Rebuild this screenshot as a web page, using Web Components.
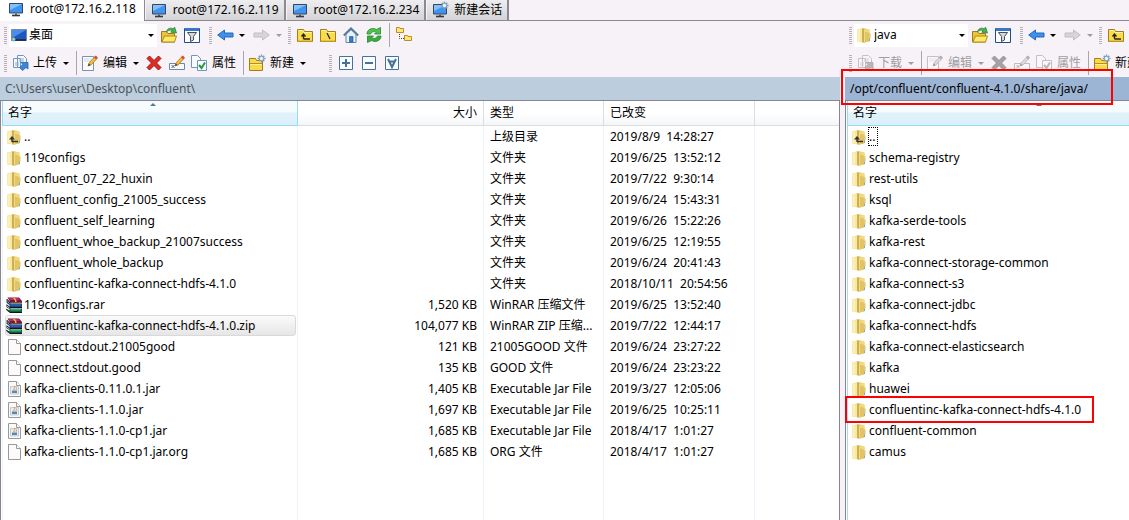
<!DOCTYPE html>
<html lang="zh-CN">
<head>
<meta charset="utf-8">
<title>confluent - WinSCP</title>
<style>
html,body{height:100%}
body{margin:0;background:#f7f2f7;color:#000;font:12px/20px "Noto Sans","Noto Sans CJK SC",sans-serif}
</style>
</head>
<body>
<file-commander></file-commander>
<script>
const FOLDER = '<path d="M1.500 2.500 8 1l5.500 1.500v12L8 15.500l-6.500-1z" fill="#edd778"/><path d="M1.500 2.500 6 1.500v13.700l-4.500-.7z" fill="#f8e9a0"/><path d="M6 1.200 8.500 2v14L6 15z" fill="#cdae55"/><path d="M8 2.500h5.500v11.500L8 15.500z" fill="#f0da83"/><path d="M9 4.500 13.500 6v8L9 15.500z" fill="#e2c464"/><path d="M3 3v11" stroke="#fff8cf"/><path d="M14 6.500v5" stroke="#ddbf5a"/><path d="M13.500 11.500v2.500" stroke="#65b7da"/>';
const YF = '<path d="M.5 2.500h6l1 2h8v10H.5z" fill="#f8dc49" stroke="#a37f1a"/><path d="M1.500 3.500h4.500l1 2h7.500" fill="none" stroke="#fff3a4"/><path d="M1 14h14" stroke="#d9ae28"/>';
const PAGE = '<path d="M2.500.5h8l4 4v11h-12z" fill="#fbf9f9" stroke="#999"/><path d="M10.500.5v4h4" fill="#fff" stroke="#999"/>';
const PENCIL = '<path d="m6 11 1-3 6.500-7 2 2L9 10z" fill="#f6bd3d" stroke="#a77824" stroke-width=".8"/><path d="m12 2.500 1.700-2 2 2-1.700 2z" fill="#d94d3d"/><path d="m6 11 .8-2.500L8.500 10z" fill="#513a2b"/>';
const MONITOR = '<path d="M1.500 2.500h13v9.500h-13z" fill="#4093ee" stroke="#34475d"/><path d="M2 3h12L2 9z" fill="#83c0ff"/><path d="M7 12.500h2v1.500H7z" fill="#666"/><path d="M4 14.500h8" stroke="#33373d" stroke-width="1.600"/>';
const GEAR = '<g transform="translate(12.500 3.500)"><path d="M0-4V4M-4 0H4M-2.800-2.800 2.800 2.800M-2.800 2.800 2.800-2.800" stroke="#7f9bb8" stroke-width="1.400"/><circle r="2.200" fill="#edf4fc" stroke="#7f9bb8"/></g>';
const ARROW = (a,b) => `<path d="M7.500 3v3H16v4H7.500v3L.7 8z" fill="${a}" stroke="${b}"/>`;
const BOX = '<path d="M1.500 1.500h13v13h-13z" fill="#f8fbff" stroke="#467199"/>';
const ICONS = {
  monitor: MONITOR,
  newsession: MONITOR + GEAR,
  desktop: '<path d="M.5 2.500h15v11H.5z" fill="#1d59c0" stroke="#7c8aa0"/><path d="M1 3h14L1 11z" fill="#4c8de8"/><path d="M1 12h14v2H1z" fill="#233246"/><circle cx="2.500" cy="12.500" r="2" fill="#51b8e4"/><path d="M2 11h1.500v2H2z" fill="#ffcb3d"/>',
  folder: FOLDER,
  parent: FOLDER + '<path d="M6 12.500h6M6 13V9" fill="none" stroke="#333" stroke-width="1.400"/><path d="M3 10.500 6 7l3 3.500z" fill="#333"/>',
  file: PAGE,
  jar: PAGE + '<path d="M4.500 5.500h8v7.500h-8z" fill="#e5eef5" stroke="#a7bccd" stroke-width=".7"/><path d="M6 9.500h5V12H6z" fill="#5d86a5"/><path d="M8 9c-1-2 2-2 .5-4M10 9c0-1 1-1 .5-2.500" fill="none" stroke="#e19247"/>',
  rar: '<path d="M1 2 4 5v10.500L.5 13z" fill="#eee" stroke="#222" stroke-width=".7"/><path d="M1.500.5H13L16 4v1.500H4.500z" fill="#7d163b"/><path d="M2 1h10l2 2H4z" fill="#b93062"/><path d="M1 4.500 4 7h12v3H4L1 7.500z" fill="#163f87"/><path d="M4.500 7.500H15v1H4.500z" fill="#3783d3"/><path d="M1 9.500 4 11.500h12v3.800H4L1 13z" fill="#105d3c"/><path d="M4.500 12H15v1.500H4.500z" fill="#36af65"/><path d="M0 5.500 3.500 8v1.500L0 7zM0 10l3.500 2v1.500L0 11.500z" fill="#fff"/><path d="M1 3.500 4 6h12M1 8l3 2.500h12M1 12.500l3 3h12" fill="none" stroke="#16121c"/><path d="M7 1h2l1.500 2.500V5H9V3.500z" fill="#e4bc42"/>',
  open: '<path d="M.5 15V4.500h5l1.500 2h6.500V15z" fill="#edc538" stroke="#a17b1b"/><path d="m.8 15 2.700-6h12l-2 6z" fill="#ffea68" stroke="#ae8822"/><path d="M5.500 5C6 1.500 9 .3 12 1.700L13.700.3l1.800 5.700-5.800-.8 1.500-1.500C9 2.400 7 3.500 5.500 5z" fill="#41b44b" stroke="#237d31" stroke-width=".7"/>',
  filter: '<path d="M.5 1.500h15v14H.5z" fill="#fff" stroke="#204d8d"/><path d="M1 1h14v3H1z" fill="#3976c5"/><path d="M3.500 5.500h9L9.500 9.500V13l-3 1.500v-5z" fill="#d4d8df" stroke="#454f60"/>',
  back: ARROW('#3d90ec','#2568b9'),
  forward: `<g transform="translate(16 0) scale(-1 1)">${ARROW('#bcb8be','#8e8a90')}</g>`,
  up: YF + '<path d="M6.500 12H13M6.500 12V8M4.500 9.500l2-2.500 2 2.500" fill="none" stroke="#29251a" stroke-width="1.400"/>',
  root: YF + '<path d="m7 6 3 6" stroke="#29251a" stroke-width="1.200"/>',
  home: '<path d="M3 7v8.500h10V7L8 2.500z" fill="#e8f2fb" stroke="#6784a4"/><path d="M.8 8.500 8 1.500l7.200 7" fill="none" stroke="#567a9e" stroke-width="2"/><path d="M6.500 9.500h3.500V15H6.500z" fill="#3b7dcc" stroke="#235b9b" stroke-width=".7"/>',
  refresh: '<path d="M1 7C1 2.500 6 0 10.500 2.500L14.500.5V7H8.500l2-2C7.500 4 5 5 4.500 7z" fill="#4dc44b" stroke="#24852d" stroke-width=".8"/><path d="M15 9c0 4.500-5 7-9.500 4.500L1.500 15.500V9h6l-2 2c3 1 5.500 0 6-2z" fill="#39ad3c" stroke="#24852d" stroke-width=".8"/>',
  tree: '<path d="M.5 1V.500h3l.5 1h3.500v4h-7zM8.500 8.500h3l.5 1h3.500v4h-7z" fill="#ffe57a" stroke="#b98d1e"/><path d="M3.500 7v4.500H8" fill="none" stroke="#444" stroke-dasharray="1 1"/>',
  upload: '<path d="M1.500 3.500h7v9h-7zM5.500.5h6l3 3v9h-9z" fill="#f6faff" stroke="#7196bd"/><path d="M7 4h5M7 6h5M3 8h4M3 10h4" stroke="#8aaed4"/><path d="M9 7.500h7V14l-2-1.500-3.500 3-3-3L11 9.500z" fill="#3c86db" stroke="#2865ad" stroke-width=".8"/>',
  edit: '<path d="M.5 1.500h11v14H.5z" fill="#fafcff" stroke="#7792af"/><path d="M2 4h8M2 6h7" stroke="#cbd7e3"/>' + PENCIL,
  delete: '<path d="M3.500 1 8 5.500 12.500 1 15 3.500 10.500 8l4.500 4.500-2.500 2.500L8 10.500 3.500 15 1 12.500 5.500 8 1 3.500z" fill="#dc2d25" stroke="#a71513"/>',
  rename: '<path d="M.5 8.500h15v6H.5z" fill="#f7faff" stroke="#668baf"/><path d="m2.500 10 3 3m0-3-3 3" stroke="#4c6682"/>' + PENCIL,
  props: '<path d="M.5.5h6l3 3v9h-9z" fill="#f8fbff" stroke="#7295ba"/><path d="M6.500 5.500h9v10h-9z" fill="#f9fbff" stroke="#7295ba"/><path d="m8 10 2.500 3L14 7.500" fill="none" stroke="#28983d" stroke-width="2"/>',
  newfolder: '<path d="M.5 3.500h6l1 2h6v10H.5z" fill="#f9db4a" stroke="#a37f1a"/><path d="M1 8.500h12" stroke="#b6901e"/><path d="M1.500 9.500h11" stroke="#fff1a0"/>' + GEAR,
  plus: BOX + '<path d="M4 8h8M8 4v8" stroke="#467199" stroke-width="2"/>',
  minus: BOX + '<path d="M4 8h8" stroke="#467199" stroke-width="2"/>',
  invert: BOX + '<path d="m4 4 4 8 4-8M5 6.500h6" fill="none" stroke="#467199" stroke-width="2"/>'
};

const define = (tag, css, render) => customElements.define(tag, class extends HTMLElement {
  connectedCallback() {
    if (this.shadowRoot) return;
    this.attachShadow({mode: 'open'}).innerHTML = `<style>*,::before,::after{box-sizing:border-box}:host{box-sizing:border-box}${css}</style>${render(this)}`;
  }
});

define('ui-icon', ':host{display:block;flex:none;width:16px;height:16px}svg{display:block;width:16px;height:16px;overflow:visible}',
  el => `<svg viewBox="0 0 16 16" aria-hidden="true">${ICONS[el.getAttribute('name')]}</svg>`);

define('session-tab', `
:host{display:block;flex:none;height:20px}
:host([active]){height:21px}
button{display:flex;align-items:center;gap:6px;height:100%;padding:0 5px;font:inherit;font-size:12px;line-height:16px;white-space:nowrap;color:#000;border:solid #8c8a8e;border-width:0 2px 0 0;background:linear-gradient(#eeedef,#d4d4d6)}
:host([active]) button{background:#fff;padding:0 8px 4px;border-right-width:1px}`,
  el => `<button role="tab" aria-selected="${el.hasAttribute('active')}"><ui-icon name="${el.getAttribute('icon')}"></ui-icon><slot></slot></button>`);

define('tool-grip', `:host{display:block;flex:none;width:3px;height:17px;margin-right:2px;background:repeating-linear-gradient(#b5b1b6 0 1px,transparent 1px 2px)}`, () => '');
define('tool-sep', `:host{display:block;flex:none;width:1px;height:24px;margin:0 2px 0 4px;background:#a9a6aa}`, () => '');

define('tool-button', `
:host{display:block;flex:none}
button{display:flex;align-items:center;justify-content:center;height:23px;min-width:23px;padding:0 3px;border:0;background:none;color:#000;font:inherit;line-height:20px}
.t{margin-left:5px;white-space:nowrap}
.c{width:0;border:3px solid transparent;border-top-color:#000;border-bottom:0;margin-left:6px}
:host([plain]) .c{margin-right:3px}
button:disabled{color:#a09da1}
button:disabled ui-icon{filter:grayscale(1);opacity:.5}
button:disabled .c{border-top-color:#a09da1}`,
  el => {
    const t = el.textContent.trim();
    return `<button aria-label="${t || el.getAttribute('icon')}"${el.hasAttribute('off') ? ' disabled' : ''}><ui-icon name="${el.getAttribute('icon')}"></ui-icon>${t ? '<span class="t"><slot></slot></span>' : ''}${el.hasAttribute('menu') ? '<span class="c"></span>' : ''}</button>`;
  });

define('location-box', `
:host{display:flex;flex:none;align-items:center;width:148px;height:23px;padding-left:2px;background:#fff}
:host([narrow]){width:114px}
select{appearance:none;flex:1;min-width:0;height:22px;border:0;padding:0 0 0 2px;background:none;font:inherit;color:#000;outline:0}
i{width:0;border:3px solid transparent;border-top-color:#000;border-bottom:0;margin-right:3px}`,
  el => `<ui-icon name="${el.getAttribute('icon')}"></ui-icon><select aria-label="位置"><option>${el.getAttribute('value')}</option></select><i></i>`);

define('tool-row', `:host{display:flex;align-items:center;height:28px;padding-left:4px;overflow:hidden}`, () => '<slot></slot>');

define('path-bar', `
:host{display:block;position:relative;height:23px;padding:0 5px;line-height:23px;background:#bccddd;color:#4b535b;white-space:nowrap}
:host([active]){background:#9db5d5;color:#000}
:host([marked])::after{content:"";box-sizing:border-box;position:absolute;z-index:2;left:-4px;top:-8px;width:272px;height:36px;border:2px solid #f00}`, () => '<slot></slot>');

const LOCAL = [
  ['parent','..','','上级目录','2019/8/9  14:28:27'],
  ['folder','119configs','','文件夹','2019/6/25  13:52:12'],
  ['folder','confluent_07_22_huxin','','文件夹','2019/7/22  9:30:14'],
  ['folder','confluent_config_21005_success','','文件夹','2019/6/24  15:43:31'],
  ['folder','confluent_self_learning','','文件夹','2019/6/26  15:22:26'],
  ['folder','confluent_whoe_backup_21007success','','文件夹','2019/6/25  12:19:55'],
  ['folder','confluent_whole_backup','','文件夹','2019/6/24  20:41:43'],
  ['folder','confluentinc-kafka-connect-hdfs-4.1.0','','文件夹','2018/10/11  20:54:56'],
  ['rar','119configs.rar','1,520 KB','WinRAR 压缩文件','2019/6/25  13:52:40'],
  ['rar','confluentinc-kafka-connect-hdfs-4.1.0.zip','104,077 KB','WinRAR ZIP 压缩...','2019/7/22  12:44:17','sel'],
  ['file','connect.stdout.21005good','121 KB','21005GOOD 文件','2019/6/24  23:27:22'],
  ['file','connect.stdout.good','135 KB','GOOD 文件','2019/6/24  23:23:22'],
  ['jar','kafka-clients-0.11.0.1.jar','1,405 KB','Executable Jar File','2019/3/27  12:05:06'],
  ['jar','kafka-clients-1.1.0.jar','1,697 KB','Executable Jar File','2019/6/25  10:25:11'],
  ['jar','kafka-clients-1.1.0-cp1.jar','1,685 KB','Executable Jar File','2018/4/17  1:01:27'],
  ['file','kafka-clients-1.1.0-cp1.jar.org','1,685 KB','ORG 文件','2018/4/17  1:01:27']
];
const REMOTE = [
  ['parent','..','focus'],
  ...['schema-registry','rest-utils','ksql','kafka-serde-tools','kafka-rest','kafka-connect-storage-common','kafka-connect-s3','kafka-connect-jdbc','kafka-connect-hdfs','kafka-connect-elasticsearch','kafka','huawei'].map(n => ['folder', n]),
  ['folder','confluentinc-kafka-connect-hdfs-4.1.0','marked'],
  ['folder','confluent-common'], ['folder','camus']
];
const nameCell = (icon, name, state = '') => `<td><div class="n ${state}"><ui-icon name="${icon}"></ui-icon><span>${name}</span></div></td>`;

define('file-list', `
:host{display:flex;flex:1;min-height:0;border:solid #87858f;border-width:1px 1px 0;padding-left:1px;background:#fff}
:host([remote]){border-right:0}
table{flex:none;width:100%;height:100%;table-layout:fixed;border-collapse:separate;border-spacing:0}
th,td{padding:0 6px;text-align:left;font-weight:400;white-space:pre;overflow:hidden}
th{height:25px;position:relative;background:linear-gradient(#fff 50%,#f5f6f8);border:solid #dcdde0;border-width:0 1px 1px 0}
th:first-child{background:linear-gradient(#f6fbfe 45%,#e0f2fa 50%,#dceff8);border:1px solid #96d9f9;border-top:0;padding-left:5px}
th:first-child::after{content:"";position:absolute;top:2px;left:50%;border:3px solid transparent;border-bottom-color:#4d7c96;border-top:0}
th:last-child{border-right:0}
td{height:21px;line-height:20px;border-right:1px solid #edf5fc}
td:last-child{border-right:0}
td:first-child{padding:0;border-left:1px solid #edf5fc;overflow:visible}
:host([remote]) td:first-child{border-left-color:#a9d9f5}
:host([remote]) table{min-width:376px}
.fill td{height:auto}
.size{text-align:right}
.n{display:flex;align-items:center;position:relative;height:21px;padding-left:3px;margin-right:1px}
.n span{padding-left:2px}
.sel::before{content:"";position:absolute;inset:0 0 0 2px;border:1px solid #d9d9d9;border-radius:3px;background:linear-gradient(#fbfbfb,#e7e6e7)}
.sel>*{position:relative}
.focus span{outline:1px dotted #000;padding:0;margin-left:2px;line-height:17px;width:8px}
.marked::after{content:"";position:absolute;z-index:2;left:-3px;top:-3px;width:249px;height:27px;border:2px solid #f00}`,
  el => el.hasAttribute('remote')
    ? `<table><thead><tr><th>名字</th></tr></thead><tbody>${REMOTE.map(r => `<tr>${nameCell(...r)}</tr>`).join('')}<tr class="fill"><td></td></tr></tbody></table>`
    : `<table><colgroup><col style="width:296px"><col style="width:186px"><col style="width:120px"><col style="width:151px"><col></colgroup>
<thead><tr><th>名字</th><th class="size">大小</th><th>类型</th><th>已改变</th><th></th></tr></thead>
<tbody>${LOCAL.map(r => `<tr>${nameCell(r[0], r[1], r[5])}<td class="size">${r[2]}</td><td>${r[3]}</td><td>${r[4]}</td><td></td></tr>`).join('')}<tr class="fill"><td></td><td></td><td></td><td></td><td></td></tr></tbody></table>`);

define('file-panel', `:host{display:flex;flex-direction:column;min-width:0;min-height:0}`, () => '<slot></slot>');

define('file-commander', `
:host{display:flex;flex-direction:column;min-height:100%}
nav{display:flex;gap:1px;height:21px;background:linear-gradient(#8c8a8e,#8c8a8e) 0 100%/100% 1px no-repeat}
main{flex:1;display:grid;grid-template-columns:minmax(0,840fr) 5px minmax(0,284fr);overflow:hidden}
file-panel:last-child{grid-column:3}
tool-grip.near{margin-left:6px}
tool-grip.gap{margin-left:20px}`, () => {
  const nav = `<tool-button icon="open"></tool-button><tool-button icon="filter"></tool-button><tool-grip class="near"></tool-grip><tool-button icon="back" menu plain></tool-button><tool-button icon="forward" menu plain off></tool-button><tool-grip></tool-grip><tool-button icon="up"></tool-button><tool-button icon="root"></tool-button><tool-button icon="home"></tool-button><tool-button icon="refresh"></tool-button><tool-sep></tool-sep><tool-button icon="tree"></tool-button>`;
  const acts = (icon, label, off) => `<tool-grip></tool-grip><tool-button icon="${icon}" menu ${off}>${label}</tool-button><tool-sep></tool-sep><tool-button icon="edit" menu ${off}>编辑</tool-button><tool-button icon="delete" ${off}></tool-button><tool-button icon="rename" ${off}></tool-button><tool-button icon="props" ${off}>属性</tool-button><tool-sep></tool-sep><tool-button icon="newfolder" menu>新建</tool-button>`;
  return `
<nav role="tablist">
<session-tab icon="monitor" active>root@172.16.2.118</session-tab><session-tab icon="monitor">root@172.16.2.119</session-tab><session-tab icon="monitor">root@172.16.2.234</session-tab><session-tab icon="newsession">新建会话</session-tab>
</nav>
<main>
<file-panel>
<tool-row><tool-grip></tool-grip><location-box icon="desktop" value="桌面"></location-box>${nav}</tool-row>
<tool-row>${acts('upload','上传','')}<tool-grip class="gap"></tool-grip><tool-button icon="plus"></tool-button><tool-button icon="minus"></tool-button><tool-button icon="invert"></tool-button></tool-row>
<path-bar>C:\\Users\\user\\Desktop\\confluent\\</path-bar>
<file-list></file-list>
</file-panel>
<file-panel>
<tool-row><tool-grip></tool-grip><location-box narrow icon="folder" value="java"></location-box>${nav}</tool-row>
<tool-row>${acts('upload','下载','off')}</tool-row>
<path-bar active marked>/opt/confluent/confluent-4.1.0/share/java/</path-bar>
<file-list remote></file-list>
</file-panel>
</main>`;
});
</script>
</body>
</html>
